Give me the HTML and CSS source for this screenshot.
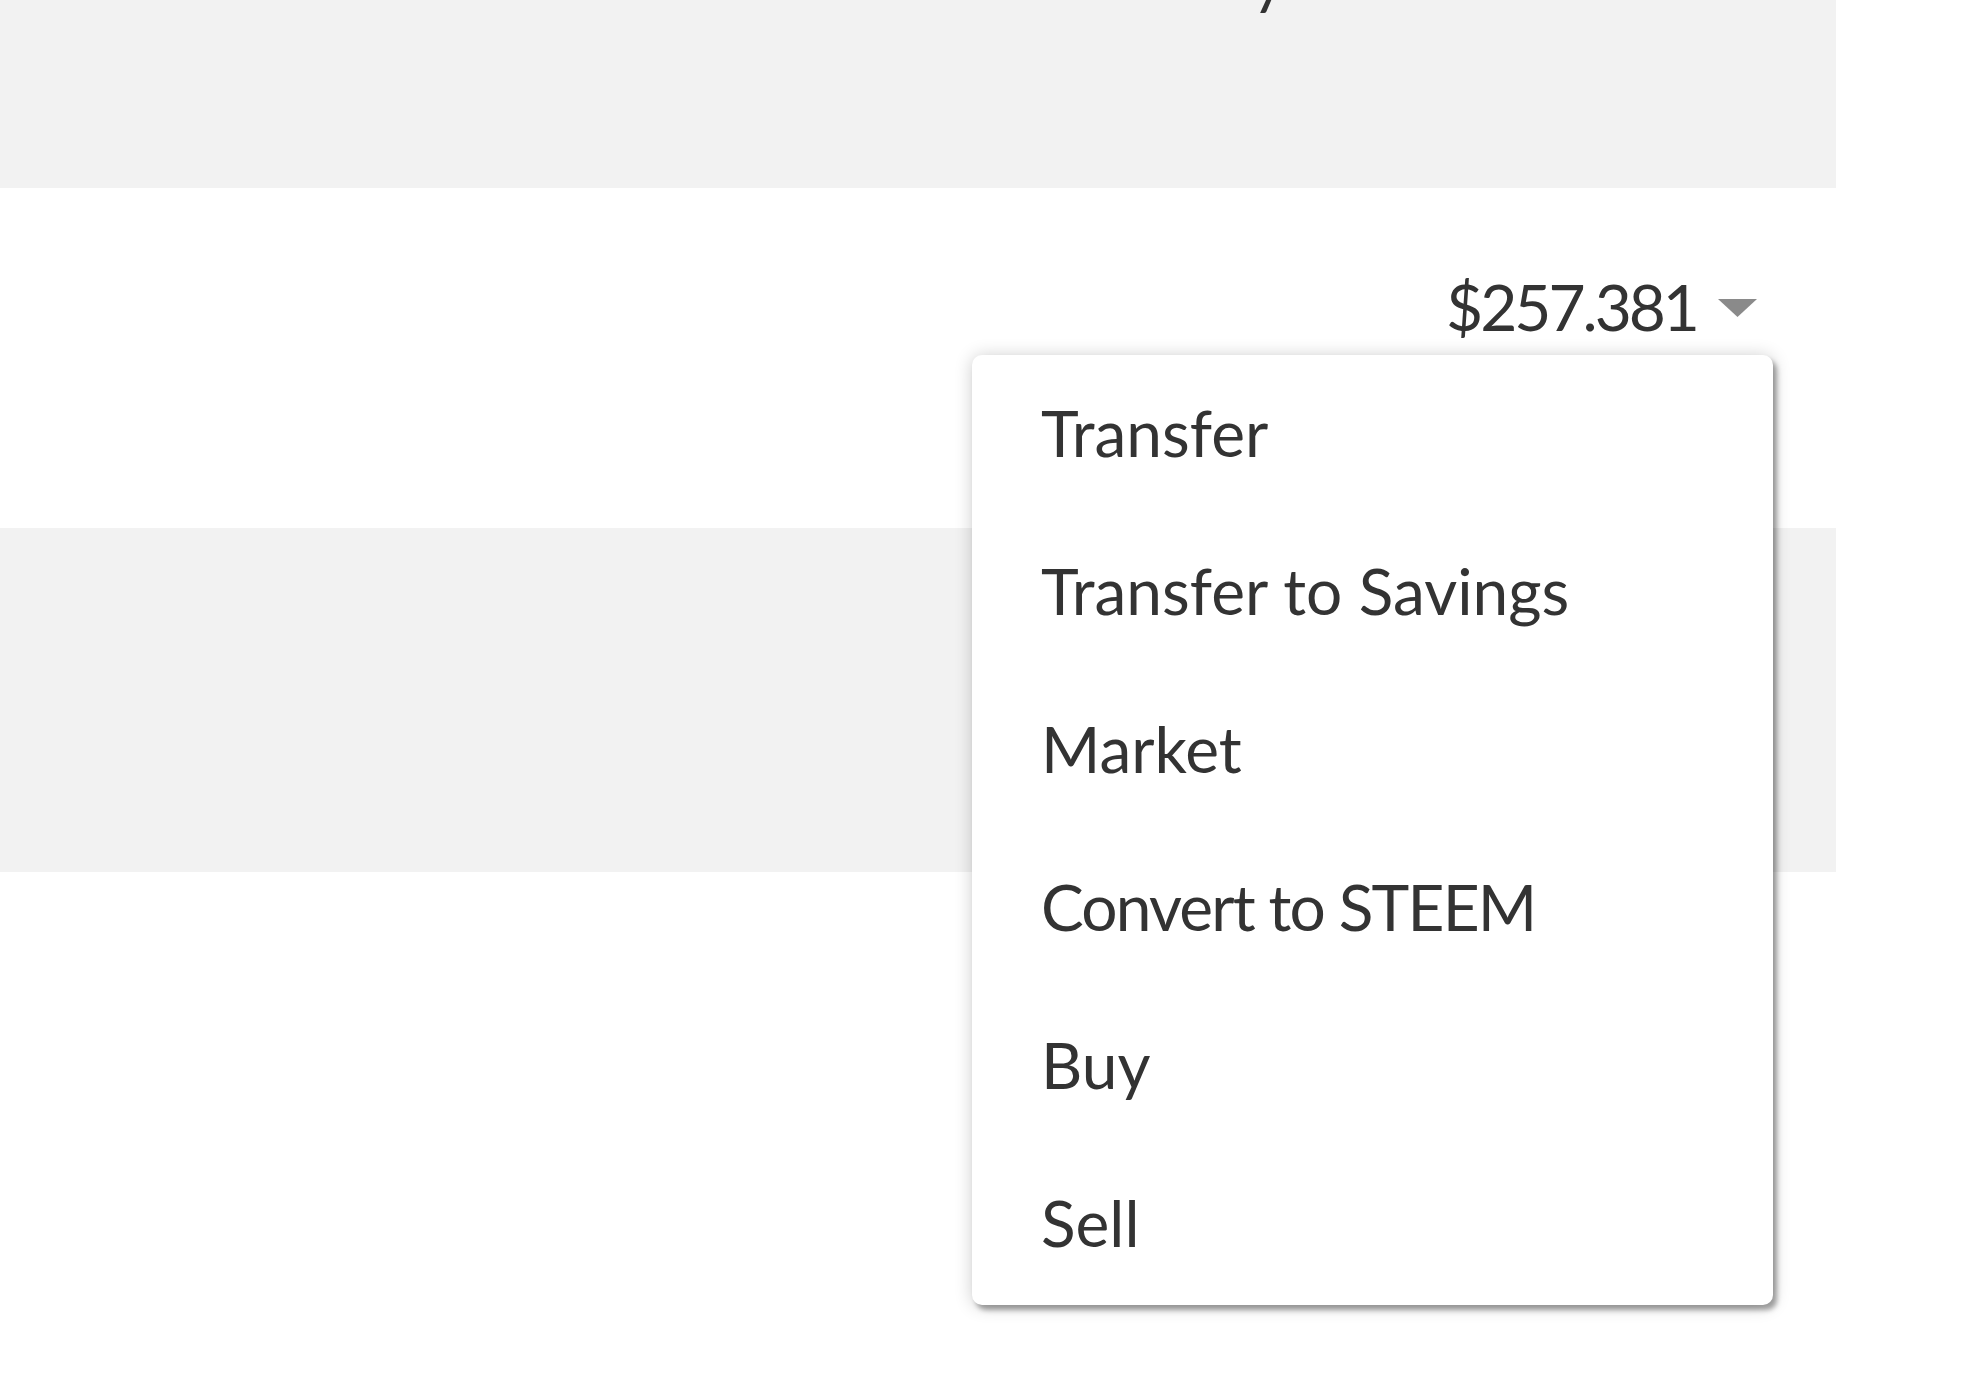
FILE: index.html
```html
<!DOCTYPE html>
<html lang="en">
<head>
    <meta charset="UTF-8">
    <meta name="viewport" content="width=device-width, initial-scale=1.0">
    <title>Wallet</title>
    <link rel="stylesheet" href="styles.css">
</head>
<body>
    <div class="wallet">
        <div class="row row-gray row-top">
            <p class="cut-text">y</p>
        </div>

        <div class="row row-price">
            <div class="balance">
                <span class="amount">$257.381</span>
                <svg class="caret" width="39" height="18" viewBox="0 0 39 18"><polygon points="0,0 39,0 19.5,18" fill="#8a8a8a"/></svg>

                <ul class="dropdown">
                    <li>Transfer</li>
                    <li>Transfer to Savings</li>
                    <li>Market</li>
                    <li class="caps">Convert to STEEM</li>
                    <li>Buy</li>
                    <li>Sell</li>
                </ul>
            </div>
        </div>

        <div class="row row-gray row-savings"></div>
        <div class="row row-end"></div>
    </div>
</body>
</html>
```

FILE: styles.css
```css
body {
    margin: 0;
    background-color: #fff;
    font-family: Lato, "Open Sans", sans-serif;
    color: #333;
}
.wallet {
    width: 1836px;
}
.row {
    box-sizing: border-box;
}
.row-gray {
    background-color: #f2f2f2;
}
.row-top {
    height: 188px;
    overflow: hidden;
}
.cut-text {
    margin: -62px 0 0 1252px;
    font-size: 64px;
    line-height: 80px;
}
.row-price {
    height: 340px;
    display: flex;
    justify-content: flex-end;
    padding: 79px 79px 0 0;
}
.balance {
    position: relative;
    display: flex;
    align-items: flex-start;
    height: 80px;
    gap: 21px;
}
.amount {
    font-size: 64px;
    line-height: 80px;
    letter-spacing: -3px;
}
.caret {
    margin-top: 32px;
}
.dropdown {
    position: absolute;
    top: 88px;
    right: -16px;
    width: 801px;
    margin: 0;
    padding: 1px 0;
    list-style: none;
    background-color: #fff;
    border-radius: 10px;
    box-shadow: 4px 5px 5px rgba(0, 0, 0, 0.34), 0 1px 18px rgba(0, 0, 0, 0.2);
    z-index: 2;
}
.dropdown li {
    height: 153px;
    line-height: 153px;
    padding: 0 0 5px 69px;
    font-size: 64px;
    color: #333;
}
.dropdown li.caps {
    letter-spacing: -1.8px;
}
.row-savings {
    height: 344px;
}
.row-end {
    height: 528px;
}
```
